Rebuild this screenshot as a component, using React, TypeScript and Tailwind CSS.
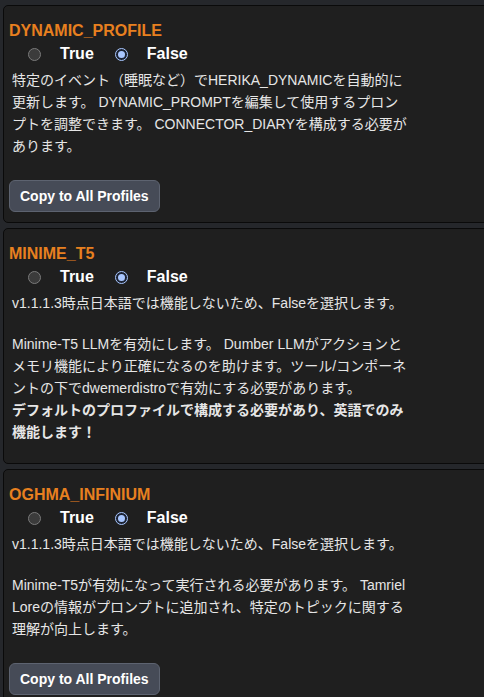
import React, { useState } from 'react'

type Setting = {
  key: string
  value: boolean
  body: React.ReactNode
  copy?: boolean
}

function Radio({ checked, label, onClick }: { checked: boolean; label: string; onClick: () => void }) {
  return (
    <label className="flex items-center cursor-pointer" onClick={onClick}>
      <span
        className={
          checked
            ? 'w-[13px] h-[13px] rounded-full border-[1.5px] border-[#a9c7ff] bg-[#1c2333] flex items-center justify-center'
            : 'w-[13px] h-[13px] rounded-full border border-[#7a7a7a] bg-[#3b3b3b]'
        }
      >
        {checked && <span className="w-[7px] h-[7px] rounded-full bg-[#a9c7ff]" />}
      </span>
      <span className="ml-[19px] text-[16px] font-bold text-white">{label}</span>
    </label>
  )
}

function SettingCard({ setting }: { setting: Setting }) {
  const [value, setValue] = useState(setting.value)

  return (
    <div className="w-[500px] bg-[#1f1f1f] border border-[#0a0a0a] rounded-[5px] pt-[15px] pb-[10px] pl-[5px]">
      <h3 className="text-[16px] leading-[20px] font-bold text-[#e8801f]">{setting.key}</h3>
      <div className="flex items-center h-[22px] mt-[2px] pl-[19px] gap-[21px]">
        <Radio checked={value} label="True" onClick={() => setValue(true)} />
        <Radio checked={!value} label="False" onClick={() => setValue(false)} />
      </div>
      <div className="mt-[4px] mb-[10px] pl-[3px] w-[398px] text-[14px] leading-[22px] text-[#e6e6e6]">
        {setting.body}
      </div>
      {setting.copy && (
        <button className="mt-[13px] h-[32px] px-[10px] rounded-[6px] bg-[#464b57] border border-[#5d6370] text-[14px] font-bold text-white">
          Copy to All Profiles
        </button>
      )}
    </div>
  )
}

const settings: Setting[] = [
  {
    key: 'DYNAMIC_PROFILE',
    value: false,
    copy: true,
    body: (
      <p>
        特定のイベント（睡眠など）でHERIKA_DYNAMICを自動的に更新します。 DYNAMIC_PROMPTを編集して使用するプロンプトを調整できます。 CONNECTOR_DIARYを構成する必要があります。
      </p>
    ),
  },
  {
    key: 'MINIME_T5',
    value: false,
    body: (
      <>
        <p className="mb-[19px]">v1.1.1.3時点日本語では機能しないため、Falseを選択します。</p>
        <p>
          Minime-T5 LLMを有効にします。 Dumber LLMがアクションとメモリ機能により正確になるのを助けます。ツール/コンポーネントの下でdwemerdistroで有効にする必要があります。
        </p>
        <p className="font-bold">デフォルトのプロファイルで構成する必要があり、英語でのみ機能します！</p>
      </>
    ),
  },
  {
    key: 'OGHMA_INFINIUM',
    value: false,
    copy: true,
    body: (
      <>
        <p className="mb-[19px]">v1.1.1.3時点日本語では機能しないため、Falseを選択します。</p>
        <p>
          Minime-T5が有効になって実行される必要があります。 Tamriel Loreの情報がプロンプトに追加され、特定のトピックに関する理解が向上します。
        </p>
      </>
    ),
  },
]

export default function App(): React.ReactElement {
  return (
    <div
      className="w-[484px] h-[697px] overflow-hidden bg-[#25272b] pt-[5px] pl-[3px] flex flex-col gap-[5px]"
      style={{ fontFamily: '"Liberation Sans", "Noto Sans CJK JP", sans-serif' }}
    >
      {settings.map((s) => (
        <SettingCard key={s.key} setting={s} />
      ))}
    </div>
  )
}
